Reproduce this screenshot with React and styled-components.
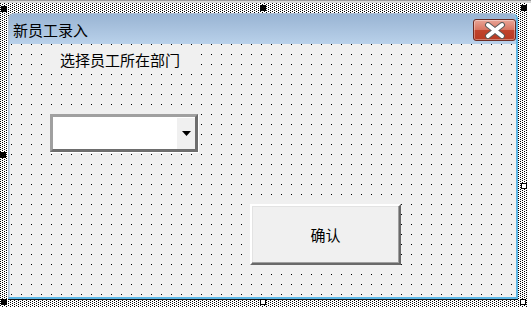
import React from 'react';
import styled, { createGlobalStyle } from 'styled-components';

const GlobalStyle = createGlobalStyle`
  html, body {
    margin: 0;
    padding: 0;
    background: #fff;
  }
  body {
    font-family: "Noto Sans CJK SC", "Noto Sans", sans-serif;
  }
`;

const Page = styled.div`
  width: 531px;
  height: 316px;
  padding-top: 3px;
  box-sizing: border-box;
  background: linear-gradient(#9c9c9c 0 1px, #d8d8d8 1px 3px, #fff 3px);
`;

// hatched selection frame of the designer
const Frame = styled.div`
  position: relative;
  width: 528px;
  height: 304px;
  box-sizing: border-box;
  padding: 10px 10px 8px 8px;
  background-color: #fff;
  background-image: conic-gradient(from 270deg at 1px 1px, #000 0 25%, transparent 0),
    conic-gradient(from 270deg at 1px 1px, #000 0 25%, transparent 0);
  background-size: 4px 2px;
  background-position: 0 0, 2px 1px;
`;

const Handle = styled.span`
  position: absolute;
  left: ${({ $x }) => $x}px;
  top: ${({ $y }) => $y}px;
  width: 6px;
  height: 6px;
  box-sizing: border-box;
  background: ${({ $open }) => ($open ? '#fff' : '#000')};
  border: 1px solid #000;
`;

const Form = styled.div`
  display: flex;
  flex-direction: column;
  width: 510px;
  height: 286px;
  box-sizing: border-box;
  border: 1px solid #aebfd3;
  border-right: 2px solid #5db7e6;
  border-bottom: 2px solid #5db7e6;
  border-radius: 6px 6px 0 0;
  box-shadow: 0 1px 0 #111;
  background: #f0f0f0;
  overflow: hidden;
`;

const TitleBar = styled.div`
  display: flex;
  align-items: center;
  justify-content: space-between;
  height: 30px;
  flex-shrink: 0;
  padding: 0 0 0 4px;
  background: linear-gradient(#99b4d3, #b9d1ea);
`;

const Title = styled.span`
  font-size: 15px;
  color: #000;
  line-height: 1;
  margin-top: 1px;
`;

const CloseButton = styled.button`
  display: flex;
  align-items: center;
  justify-content: center;
  width: 43px;
  height: 22px;
  margin-top: 2px;
  padding: 0;
  border: 1px solid #6b2a22;
  border-radius: 3px;
  background: linear-gradient(#e9a597 0%, #d87663 48%, #c0432c 52%, #b83a22 100%);
  box-shadow: inset 0 0 0 1px rgba(255, 255, 255, 0.35);
`;

const Body = styled.div`
  flex: 1;
  display: flex;
  flex-direction: column;
  align-items: flex-start;
  padding: 5px 0 0 40px;
  border-left: 1px solid #c7dcef;
  background-color: #f0f0f0;
  background-image: conic-gradient(from 270deg at 1px 1px, #000 0 25%, transparent 0);
  background-size: 10px 10px;
  background-position: 1px 0;
`;

const Label = styled.div`
  width: 146px;
  height: 22px;
  padding-left: 10px;
  box-sizing: border-box;
  background: #f0f0f0;
  font-size: 15px;
  line-height: 22px;
  color: #000;
  white-space: nowrap;
`;

const Combo = styled.div`
  display: flex;
  width: 148px;
  height: 38px;
  margin-top: 43px;
  box-sizing: border-box;
  border-top: 3px solid #a0a0a0;
  border-left: 3px solid #a0a0a0;
  border-right: 3px solid #6d6d6d;
  border-bottom: 3px solid #6d6d6d;
  box-shadow: 1px 1px 0 #fff;
`;

const ComboField = styled.div`
  flex: 1;
  background: #fff;
`;

const ComboArrow = styled.div`
  display: flex;
  align-items: center;
  justify-content: center;
  width: 19px;
  box-sizing: border-box;
  background: #f0f0f0;
  border-top: 1px solid #fff;
  border-left: 1px solid #fff;
`;

const Button = styled.button`
  width: 151px;
  height: 61px;
  margin: 52px 0 0 200px;
  box-sizing: border-box;
  border-top: 2px solid #fff;
  border-left: 2px solid #fff;
  border-right: 2px solid #696969;
  border-bottom: 2px solid #696969;
  box-shadow: inset -1px -1px 0 #a0a0a0, inset 1px 1px 0 #e3e3e3;
  background: #f0f0f0;
  font-family: "Noto Sans CJK SC", "Noto Sans", sans-serif;
  font-size: 15px;
  color: #000;
  padding: 0;
`;

const CloseIcon = () => (
  <svg width="22" height="17" viewBox="0 0 22 17">
    <g strokeLinecap="round">
      <line x1="4" y1="3" x2="18" y2="14" stroke="#5b5b5b" strokeWidth="6" />
      <line x1="18" y1="3" x2="4" y2="14" stroke="#5b5b5b" strokeWidth="6" />
      <line x1="4" y1="3" x2="18" y2="14" stroke="#fff" strokeWidth="4" />
      <line x1="18" y1="3" x2="4" y2="14" stroke="#fff" strokeWidth="4" />
    </g>
  </svg>
);

const handles = [
  { x: 1, y: 3 },
  { x: 260, y: 2 },
  { x: 521, y: 2 },
  { x: 0, y: 149 },
  { x: 521, y: 180, open: true },
  { x: 1, y: 296 },
  { x: 260, y: 296, open: true },
  { x: 520, y: 296, open: true },
];

const App = () => {
  return (
    <Page>
      <GlobalStyle />
      <Frame>
        <Form>
          <TitleBar>
            <Title>新员工录入</Title>
            <CloseButton>
              <CloseIcon />
            </CloseButton>
          </TitleBar>
          <Body>
            <Label>选择员工所在部门</Label>
            <Combo>
              <ComboField />
              <ComboArrow>
                <svg width="9" height="5" viewBox="0 0 9 5">
                  <path d="M0 0 H9 L4.5 5 Z" fill="#000" />
                </svg>
              </ComboArrow>
            </Combo>
            <Button>确认</Button>
          </Body>
        </Form>
        {handles.map((h, i) => (
          <Handle key={i} $x={h.x} $y={h.y} $open={h.open} />
        ))}
      </Frame>
    </Page>
  );
};

export default App;
